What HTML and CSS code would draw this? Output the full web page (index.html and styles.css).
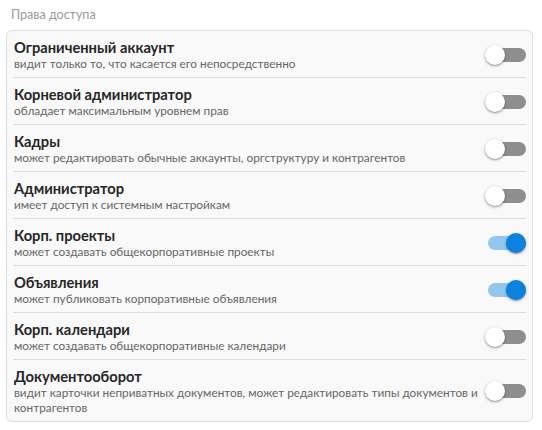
FILE: index.html
```html
<!DOCTYPE html>
<html lang="ru">
<head>
<meta charset="utf-8">
<link rel="stylesheet" href="styles.css">
</head>
<body>
<div class="panel">
  <div class="caption">Права доступа</div>
  <div class="card">
    <div class="row">
      <div class="text">
        <div class="title">Ограниченный аккаунт</div>
        <div class="desc">видит только то, что касается его непосредственно</div>
      </div>
      <span class="switch"><span class="track"></span><span class="thumb"></span></span>
    </div>
    <div class="row">
      <div class="text">
        <div class="title">Корневой администратор</div>
        <div class="desc">обладает максимальным уровнем прав</div>
      </div>
      <span class="switch"><span class="track"></span><span class="thumb"></span></span>
    </div>
    <div class="row">
      <div class="text">
        <div class="title">Кадры</div>
        <div class="desc">может редактировать обычные аккаунты, оргструктуру и контрагентов</div>
      </div>
      <span class="switch"><span class="track"></span><span class="thumb"></span></span>
    </div>
    <div class="row">
      <div class="text">
        <div class="title">Администратор</div>
        <div class="desc">имеет доступ к системным настройкам</div>
      </div>
      <span class="switch"><span class="track"></span><span class="thumb"></span></span>
    </div>
    <div class="row">
      <div class="text">
        <div class="title">Корп. проекты</div>
        <div class="desc">может создавать общекорпоративные проекты</div>
      </div>
      <span class="switch on"><span class="track"></span><span class="thumb"></span></span>
    </div>
    <div class="row">
      <div class="text">
        <div class="title">Объявления</div>
        <div class="desc">может публиковать корпоративные объявления</div>
      </div>
      <span class="switch on"><span class="track"></span><span class="thumb"></span></span>
    </div>
    <div class="row">
      <div class="text">
        <div class="title">Корп. календари</div>
        <div class="desc">может создавать общекорпоративные календари</div>
      </div>
      <span class="switch"><span class="track"></span><span class="thumb"></span></span>
    </div>
    <div class="row">
      <div class="text">
        <div class="title">Документооборот</div>
        <div class="desc">видит карточки неприватных документов, может редактировать типы документов и контрагентов</div>
      </div>
      <span class="switch"><span class="track"></span><span class="thumb"></span></span>
    </div>
  </div>
</div>
</body>
</html>
```
FILE: styles.css
```css
html, body {
  margin: 0;
  padding: 0;
  background: #ffffff;
}
body {
  font-family: "Lato", "Noto Sans", sans-serif;
  width: 542px;
  height: 430px;
  overflow: hidden;
}
.panel {
  padding: 6px 9px 0 6px;
}
.caption {
  font-size: 12.5px;
  line-height: 18px;
  color: #9a9a9a;
  padding-left: 5px;
  margin-bottom: 6px;
}
.card {
  border: 1px solid #dedede;
  border-radius: 6px;
  background: #f9f9f9;
}
.row {
  display: flex;
  align-items: center;
  margin: 0 6px;
  padding: 7px 0 6px 1px;
  border-bottom: 1px solid #dcdcdc;
  gap: 6px;
}
.row:last-child {
  border-bottom: none;
}
.text {
  flex: 1;
  min-width: 0;
}
.title {
  font-size: 14.7px;
  line-height: 18px;
  font-weight: 700;
  color: #262626;
}
.desc {
  font-size: 11.8px;
  line-height: 15px;
  color: #666666;
}
.switch {
  position: relative;
  width: 41px;
  height: 20px;
  flex: none;
}
.track {
  position: absolute;
  left: 3px;
  right: 0;
  top: 3px;
  height: 14px;
  border-radius: 7px;
  background: #8e8e8e;
}
.thumb {
  position: absolute;
  left: 0;
  top: 0;
  width: 20px;
  height: 20px;
  border-radius: 50%;
  background: #ffffff;
  box-shadow: 0 1px 3px rgba(0,0,0,0.35), 0 1px 1px rgba(0,0,0,0.14);
}
.switch.on .track {
  background: #92c8f0;
}
.switch.on .thumb {
  left: 21px;
  background: #0a82e0;
}
```
